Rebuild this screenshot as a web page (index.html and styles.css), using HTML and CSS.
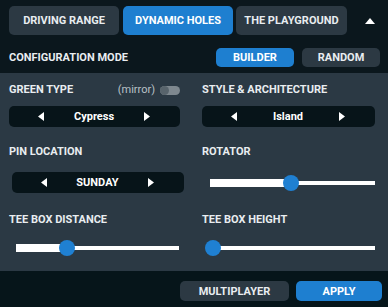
FILE: index.html
```html
<!DOCTYPE html>
<html lang="en">

<head>
    <meta charset="UTF-8">
    <meta name="viewport" content="width=device-width, initial-scale=1.0">
    <title>Course Setup</title>
    <link rel="stylesheet" href="styles.css">
</head>

<body>

    <div class="app">
        <div class="tabs">
            <div class="tab">DRIVING RANGE</div>
            <div class="tab active">DYNAMIC HOLES</div>
            <div class="tab wide">THE PLAYGROUND</div>
            <div class="collapse">
                <svg width="10" height="6" viewBox="0 0 10 6"><polygon points="0,6 10,6 5,0" fill="#fff"/></svg>
            </div>
        </div>

        <div class="mode-row">
            <span class="label mode-label">CONFIGURATION MODE</span>
            <div class="mode-buttons">
                <div class="pill active">BUILDER</div>
                <div class="pill">RANDOM</div>
            </div>
        </div>

        <div class="panel">
            <div class="label field-label">
                <span>GREEN TYPE</span>
                <span class="mirror">(mirror) <span class="toggle"><span class="knob"></span></span></span>
            </div>
            <div class="label field-label">STYLE &amp; ARCHITECTURE</div>

            <div class="control">
                <div class="selector">
                    <svg width="6" height="9" viewBox="0 0 6 9"><polygon points="6,0 6,9 0,4.5" fill="#fff"/></svg>
                    <span>Cypress</span>
                    <svg width="6" height="9" viewBox="0 0 6 9"><polygon points="0,0 0,9 6,4.5" fill="#fff"/></svg>
                </div>
            </div>
            <div class="control">
                <div class="selector">
                    <svg width="6" height="9" viewBox="0 0 6 9"><polygon points="6,0 6,9 0,4.5" fill="#fff"/></svg>
                    <span>Island</span>
                    <svg width="6" height="9" viewBox="0 0 6 9"><polygon points="0,0 0,9 6,4.5" fill="#fff"/></svg>
                </div>
            </div>

            <div class="label field-label">PIN LOCATION</div>
            <div class="label field-label">ROTATOR</div>

            <div class="control">
                <div class="selector shifted">
                    <svg width="6" height="9" viewBox="0 0 6 9"><polygon points="6,0 6,9 0,4.5" fill="#fff"/></svg>
                    <span>SUNDAY</span>
                    <svg width="6" height="9" viewBox="0 0 6 9"><polygon points="0,0 0,9 6,4.5" fill="#fff"/></svg>
                </div>
            </div>
            <div class="control">
                <div class="slider right">
                    <div class="track"></div>
                    <div class="fill" style="width:49%"></div>
                    <div class="thumb" style="left:49%"></div>
                </div>
            </div>

            <div class="label field-label">TEE BOX DISTANCE</div>
            <div class="label field-label">TEE BOX HEIGHT</div>

            <div class="control">
                <div class="slider left">
                    <div class="track"></div>
                    <div class="fill" style="width:31%"></div>
                    <div class="thumb" style="left:31%"></div>
                </div>
            </div>
            <div class="control">
                <div class="slider right">
                    <div class="track"></div>
                    <div class="fill" style="width:2%"></div>
                    <div class="thumb" style="left:2%"></div>
                </div>
            </div>
        </div>

        <div class="footer">
            <div class="pill multi">MULTIPLAYER</div>
            <div class="pill active apply">APPLY</div>
        </div>
    </div>

</body>

</html>
```

FILE: styles.css
```css
body {
    margin: 0;
    font-family: Roboto, "Liberation Sans", sans-serif;
    background-color: #0b171d;
    color: #e9edf0;
}

.app {
    width: 388px;
    height: 307px;
    display: flex;
    flex-direction: column;
    background-color: #0b171d;
}

.tabs {
    display: flex;
    gap: 4px;
    height: 38px;
    padding: 6px 0 0 9px;
    box-sizing: border-box;
}

.tab {
    width: 110px;
    height: 29px;
    border-radius: 5px;
    background-color: #2c3943;
    font-size: 11px;
    font-weight: 700;
    display: flex;
    align-items: center;
    justify-content: center;
}

.tab.wide {
    width: 111px;
    margin-left: -1px;
}

.tab.active {
    background-color: #1e7fd0;
    color: #fff;
}

.collapse {
    flex: 1;
    display: flex;
    align-items: center;
    justify-content: center;
    height: 29px;
}

.label {
    font-size: 11px;
    font-weight: 700;
    color: #e9edf0;
}

.mode-row {
    height: 35px;
    padding: 4px 8px 0 9px;
    box-sizing: border-box;
    display: flex;
    align-items: center;
    justify-content: space-between;
}

.mode-buttons {
    display: flex;
    gap: 8px;
}

.pill {
    width: 78px;
    height: 19px;
    border-radius: 5px;
    background-color: #2c3943;
    font-size: 11px;
    font-weight: 700;
    display: flex;
    align-items: center;
    justify-content: center;
}

.pill.active {
    background-color: #1e7fd0;
    color: #fff;
}

.panel {
    height: 198px;
    box-sizing: border-box;
    background-color: #2b3944;
    padding: 10px 13px 2px 9px;
    display: grid;
    grid-template-columns: 171px 173px;
    grid-template-rows: 14px 39px 23px 47px 21px 42px;
    column-gap: 22px;
}

.field-label {
    align-self: end;
    line-height: 14px;
    display: flex;
    justify-content: space-between;
    align-items: center;
}

.mirror {
    display: flex;
    align-items: center;
    gap: 5px;
    font-weight: 400;
    color: #b9c1c6;
}

.toggle {
    width: 20px;
    height: 9px;
    border-radius: 5px;
    background-color: #7e888f;
    display: flex;
    align-items: center;
}

.knob {
    width: 9px;
    height: 9px;
    border-radius: 50%;
    background-color: #58646c;
}

.control {
    display: flex;
    align-items: center;
}

.selector {
    width: 100%;
    height: 21px;
    border-radius: 5px;
    background-color: #071419;
    display: flex;
    align-items: center;
    justify-content: space-between;
    padding: 0 30px 0 29px;
    box-sizing: border-box;
    font-size: 11px;
    font-weight: 700;
    color: #fff;
}

.selector.shifted {
    width: 172px;
    margin-left: 3px;
    flex-shrink: 0;
}

.slider {
    position: relative;
    height: 16px;
    flex: 1;
}

.slider.left {
    margin: 0 1px 0 7px;
}

.slider.right {
    margin-left: 8px;
}

.track {
    position: absolute;
    left: 0;
    right: 0;
    top: 6px;
    height: 4px;
    background-color: #fff;
}

.fill {
    position: absolute;
    left: 0;
    top: 4px;
    height: 8px;
    background-color: #fff;
}

.thumb {
    position: absolute;
    top: 0;
    width: 16px;
    height: 16px;
    margin-left: -8px;
    border-radius: 50%;
    background-color: #1f80d2;
}

.footer {
    flex: 1;
    display: flex;
    justify-content: flex-end;
    gap: 7px;
    padding: 10px 6px 0 0;
    background-color: #06151a;
}

.pill.multi {
    width: 109px;
    height: 20px;
}

.pill.apply {
    width: 86px;
    height: 20px;
}
```
